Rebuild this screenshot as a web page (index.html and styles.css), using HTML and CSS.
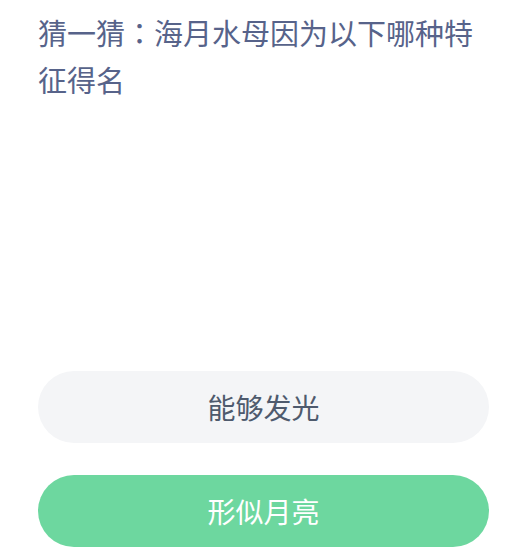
FILE: index.html
```html
<!DOCTYPE html>
<html>
    <head>
        <title>猜一猜</title>
        <link rel="stylesheet" href="styles.css">
    </head>
    <body>
        <div class="quiz">
            <h1 class="question">猜一猜<span class="colon">：</span>海月水母因为以下哪种特征得名</h1>
            <div class="options">
                <button class="option">能够发光</button>
                <button class="option correct">形似月亮</button>
            </div>
        </div>
    </body>
</html>
```

FILE: styles.css
```css
body {
    margin: 0;
    padding: 0;
    background: #fff;
    font-family: "Noto Sans CJK SC", "Noto Sans", sans-serif;
}

.quiz {
    height: 557px;
    box-sizing: border-box;
    padding: 9px 25px 10px 38px;
    display: flex;
    flex-direction: column;
    justify-content: space-between;
}

.question {
    margin: 0;
    font-size: 29px;
    font-weight: normal;
    line-height: 47px;
    color: #57638a;
}

/* centred full-width colon */
.colon {
    font-family: "Noto Sans CJK TC", sans-serif;
}

.options {
    display: flex;
    flex-direction: column;
    gap: 32px;
}

.option {
    height: 72px;
    border: none;
    border-radius: 36px;
    background: #f4f5f7;
    color: #4e5a6d;
    font-family: inherit;
    font-size: 28px;
    padding: 0;
}

.option.correct {
    background: #6dd79f;
    color: #fff;
}
```
